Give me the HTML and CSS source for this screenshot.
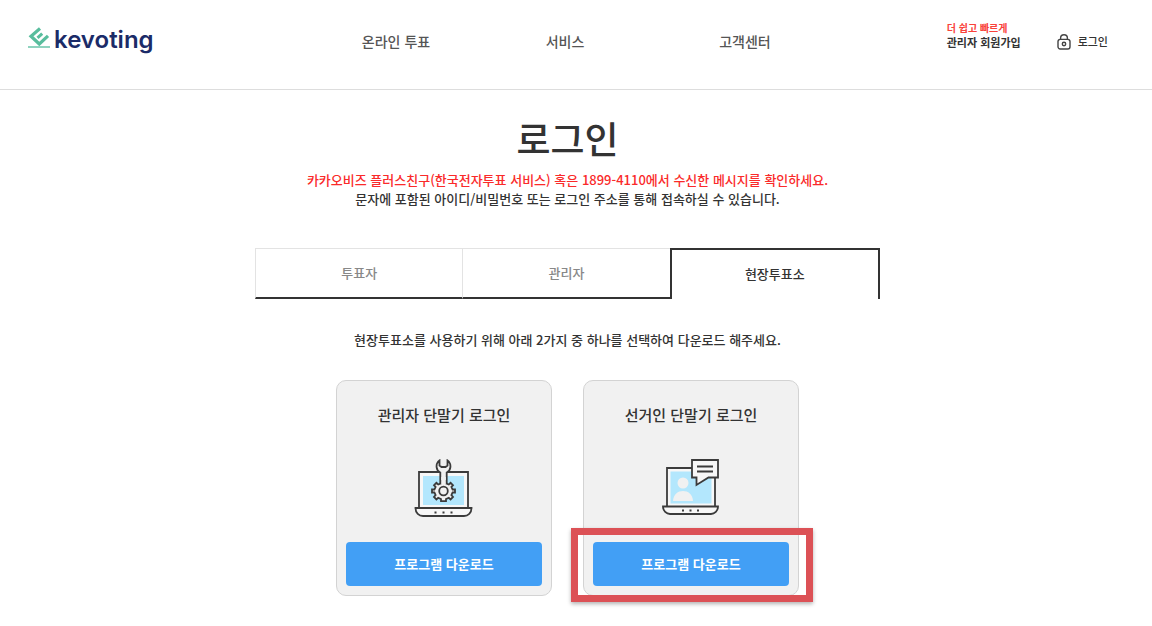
FILE: index.html
```html
<!DOCTYPE html>
<html lang="ko">
<head>
  <meta charset="UTF-8">
  <meta name="viewport" content="width=device-width, initial-scale=1.0">
  <title>로그인 - kevoting</title>
  <link rel="stylesheet" href="styles.css">
</head>
<body>
  <header class="header">
    <a class="logo" href="#">
      <svg class="logo-mark" width="22" height="22" viewBox="0 0 22 22" fill="none" stroke="#58bd9d">
        <path d="M12 1.500 3 9.200 11.300 17 20 8.800" stroke-width="3.200"/>
        <path d="M9.500 10.800 14.200 6.600" stroke-width="3"/>
        <path d="M0 20H22" stroke-width="1.800" stroke="#83cfb8"/>
      </svg>
      <span class="logo-text">kevoting</span>
    </a>

    <nav class="nav">
      <a href="#">온라인 투표</a>
      <a href="#">서비스</a>
      <a href="#">고객센터</a>
    </nav>

    <div class="user-menu">
      <a class="signup" href="#">
        <span class="signup-note">더 쉽고 빠르게</span>
        <span>관리자 회원가입</span>
      </a>
      <a class="login-link" href="#">
        <svg width="14" height="16" viewBox="0 0 14 16" fill="none" stroke="#444" stroke-width="1.4">
          <rect x="1" y="5.4" width="12" height="9.6" rx="2.2"/>
          <path d="M3.600 5.400V4a3.400 3.200 0 0 1 6.800 0v1.400"/>
          <circle cx="7" cy="10" r="1.7"/>
        </svg>
        <span>로그인</span>
      </a>
    </div>
  </header>

  <main class="content">
    <h1>로그인</h1>
    <p class="notice">카카오비즈 플러스친구(한국전자투표 서비스) 혹은 1899-4110에서 수신한 메시지를 확인하세요.</p>
    <p>문자에 포함된 아이디/비밀번호 또는 로그인 주소를 통해 접속하실 수 있습니다.</p>

    <div class="tabs" role="tablist">
      <button class="tab" type="button" role="tab">투표자</button>
      <button class="tab" type="button" role="tab">관리자</button>
      <button class="tab active" type="button" role="tab" aria-selected="true">현장투표소</button>
    </div>

    <p>현장투표소를 사용하기 위해 아래 2가지 중 하나를 선택하여 다운로드 해주세요.</p>

    <div class="cards">
      <section class="card">
        <h2>관리자 단말기 로그인</h2>
        <svg class="card-icon" width="60" height="60" viewBox="0 0 60 60" fill="none" stroke="#3b3b3b" stroke-width="1.8">
          <path d="M5 49V13H54V49" fill="#f7f7f7"/>
          <rect x="9" y="17" width="41" height="29" fill="#b3e7fd" stroke="none"/>
          <path d="M1.500 49H57.500C57.500 54 54 57 50 57H9C5 57 1.500 54 1.500 49Z" fill="#f7f7f7"/>
          <path d="M20.500 53.500h2M28.500 53.500h2M36.500 53.500h2"/>
          <path d="M26.300 26V13.500C22 11.500 21 5 25.500 1.500V6.500L27.500 8H31.500L33.500 6.500V1.500C38 5 37 11.500 32.700 13.500V26" fill="#f1f1f1"/>
          <path d="M27 24.300V22H32V24.300L34.800 25.500 36.600 23.800 39 26.200 37.400 28 38.600 30.500H41V33.500H38.600L37.400 36.200 39 38 36.600 40.400 34.800 38.800 32 40V42.200H27V40L24.200 38.800 22.400 40.400 20 38 21.600 36.200 20.400 33.500H18V30.500H20.400L21.600 28 20 26.200 22.400 23.800 24.200 25.500Z" fill="#f1f1f1"/>
          <path d="M27.200 18H31.800V25H27.200Z" fill="#f1f1f1" stroke="none"/>
          <circle cx="29.500" cy="32" r="4.300"/>
        </svg>
        <button class="download" type="button">프로그램 다운로드</button>
      </section>

      <section class="card">
        <h2>선거인 단말기 로그인</h2>
        <svg class="card-icon" width="60" height="60" viewBox="0 0 60 60" fill="none" stroke="#3b3b3b" stroke-width="1.8">
          <path d="M6 48V9H54V48" fill="#f7f7f7"/>
          <rect x="9.500" y="12.500" width="41" height="32" fill="#b3e7fd" stroke="none"/>
          <circle cx="22" cy="24" r="5.500" fill="#f1f1f1" stroke="none"/>
          <path d="M12 42C12.500 35 17 32 22 32S31.500 35 32 42Z" fill="#f1f1f1" stroke="none"/>
          <path d="M2 47.500H57C57 52 53.500 55 50 55H9C5.500 55 2 52 2 47.500Z" fill="#f7f7f7"/>
          <path d="M21 51.500h2M28.500 51.500h2M36 51.500h2"/>
          <path d="M31 1H57V18.500H47.500L35.500 26V18.500H31Z" fill="#f7f7f7"/>
          <path d="M36 7.500H52M36 12.500H52"/>
        </svg>
        <button class="download" type="button">프로그램 다운로드</button>
        <div class="highlight"></div>
      </section>
    </div>
  </main>
</body>
</html>
```

FILE: styles.css
```css
* {
  box-sizing: border-box;
}
body {
  margin: 0;
  background-color: #fff;
  color: #333;
  font-family: "Noto Sans CJK KR", sans-serif;
  font-size: 13px;
  font-weight: 500;
  line-height: 19px;
}
a {
  color: inherit;
  text-decoration: none;
}
button {
  font: inherit;
  cursor: pointer;
}
h1, h2, p {
  margin: 0;
}
.header {
  display: grid;
  grid-template-columns: 288fr 520fr 272fr;
  align-items: center;
  height: 90px;
  padding: 0 44px 6px 28px;
  border-bottom: 1px solid #ddd;
}
.logo {
  display: flex;
  align-items: center;
  gap: 4px;
}
.logo-mark {
  margin-bottom: 8px;
}
.logo-text {
  padding-bottom: 4px;
  color: #1b2b68;
  font-family: Inter, sans-serif;
  font-size: 24px;
  font-weight: 600;
  line-height: 28px;
}
.nav {
  display: grid;
  grid-template-columns: 160fr 178fr 182fr;
  color: #555;
  font-size: 14px;
  text-align: center;
}
.user-menu {
  display: flex;
  justify-content: flex-end;
  align-items: center;
  gap: 36px;
  font-size: 11px;
}
.signup {
  display: flex;
  flex-direction: column;
  margin-bottom: 14px;
  font-weight: 700;
  line-height: 14px;
}
.signup-note {
  color: #f9423a;
  font-size: 10px;
}
.login-link {
  display: flex;
  align-items: center;
  gap: 7px;
}
.content {
  max-width: 642px;
  margin: 0 auto;
  padding: 21px 17px 30px 0;
  text-align: center;
}
h1 {
  margin-bottom: 5px;
  font-size: 37px;
  font-weight: 500;
  line-height: 54px;
}
.notice {
  color: #fa2a2a;
}
.tabs {
  display: flex;
  margin: 40px 0 31px;
}
.tab {
  flex: 1;
  height: 51px;
  padding: 0 0 2px;
  border: 1px solid #e3e3e3;
  border-right: none;
  border-bottom: 2px solid #333;
  background: #fff;
  color: #888;
}
.tab.active {
  border: 2px solid #333;
  border-bottom: none;
  color: #333;
}
.cards {
  display: flex;
  justify-content: center;
  gap: 31px;
  margin-top: 31px;
}
.card {
  position: relative;
  display: flex;
  flex-direction: column;
  align-items: center;
  width: 216px;
  padding: 24px 9px 9px;
  border: 1px solid #d3d3d3;
  border-radius: 10px;
  background-color: #f1f1f1;
}
h2 {
  font-size: 15px;
  font-weight: 500;
  line-height: 20px;
}
.card-icon {
  margin: 34px 0 23px;
}
.download {
  width: 100%;
  height: 44px;
  padding: 0 0 2px;
  border: none;
  border-radius: 4px;
  background-color: #429ff5;
  color: #fff;
  font-weight: 700;
}
/* marks the download button to press */
.highlight {
  position: absolute;
  left: -13px;
  right: -15px;
  bottom: -7px;
  height: 74px;
  border: 7px solid #dc5156;
  box-shadow: 0 2px 4px rgba(0, 0, 0, 0.3);
  pointer-events: none;
}
```
